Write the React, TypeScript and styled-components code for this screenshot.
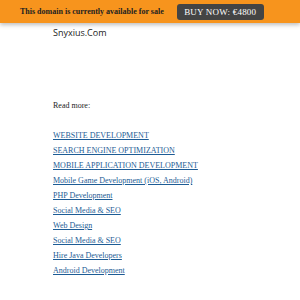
import React from 'react';
import styled, { createGlobalStyle } from 'styled-components';

const GlobalStyle = createGlobalStyle`
  body {
    margin: 0;
    background: #fff;
    font-family: 'Liberation Serif', serif;
  }
`;

const TopBar = styled.div`
  height: 23px;
  background-color: #f7941d;
  box-shadow: 0 2px 4px rgba(0, 0, 0, 0.25);
  display: flex;
  align-items: center;
  padding-left: 20px;
  gap: 13px;
`;

const SaleText = styled.span`
  font-family: 'Liberation Serif', serif;
  font-weight: bold;
  font-size: 8px;
  color: #222;
  white-space: nowrap;
`;

const BuyButton = styled.button`
  flex-shrink: 0;
  background: #444;
  color: #fff;
  border: none;
  border-radius: 3px;
  height: 16px;
  width: 87px;
  padding: 0;
  font-family: 'Liberation Serif', serif;
  font-size: 9px;
  letter-spacing: 0.2px;
`;

const Content = styled.div`
  padding-left: 53px;
`;

const SiteName = styled.div`
  font-family: 'Open Sans', sans-serif;
  font-size: 9px;
  color: #222;
  padding-top: 3px;
  height: 20px;
`;

const ReadMore = styled.p`
  font-size: 8px;
  color: #222;
  margin: 55px 0 18px;
`;

const LinkList = styled.div`
  display: flex;
  flex-direction: column;
  align-items: flex-start;
`;

const Item = styled.a<{ $caps?: boolean }>`
  display: block;
  font-size: 8px;
  line-height: 15px;
  color: #1d5c95;
  text-decoration: underline;
  text-transform: ${(p) => (p.$caps ? 'uppercase' : 'none')};
`;

const links = [
  { label: 'Website Development', caps: true },
  { label: 'Search Engine Optimization', caps: true },
  { label: 'Mobile Application Development', caps: true },
  { label: 'Mobile Game Development (iOS, Android)' },
  { label: 'PHP Development' },
  { label: 'Social Media & SEO' },
  { label: 'Web Design' },
  { label: 'Social Media & SEO' },
  { label: 'Hire Java Developers' },
  { label: 'Android Development' },
];

export default function App() {
  return (
    <>
      <GlobalStyle />
      <TopBar>
        <SaleText>This domain is currently available for sale</SaleText>
        <BuyButton>BUY NOW: €4800</BuyButton>
      </TopBar>
      <Content>
        <SiteName>Snyxius.Com</SiteName>
        <ReadMore>Read more:</ReadMore>
        <LinkList>
          {links.map((l, i) => (
            <Item key={i} href="#" $caps={l.caps}>
              {l.label}
            </Item>
          ))}
        </LinkList>
      </Content>
    </>
  );
}
